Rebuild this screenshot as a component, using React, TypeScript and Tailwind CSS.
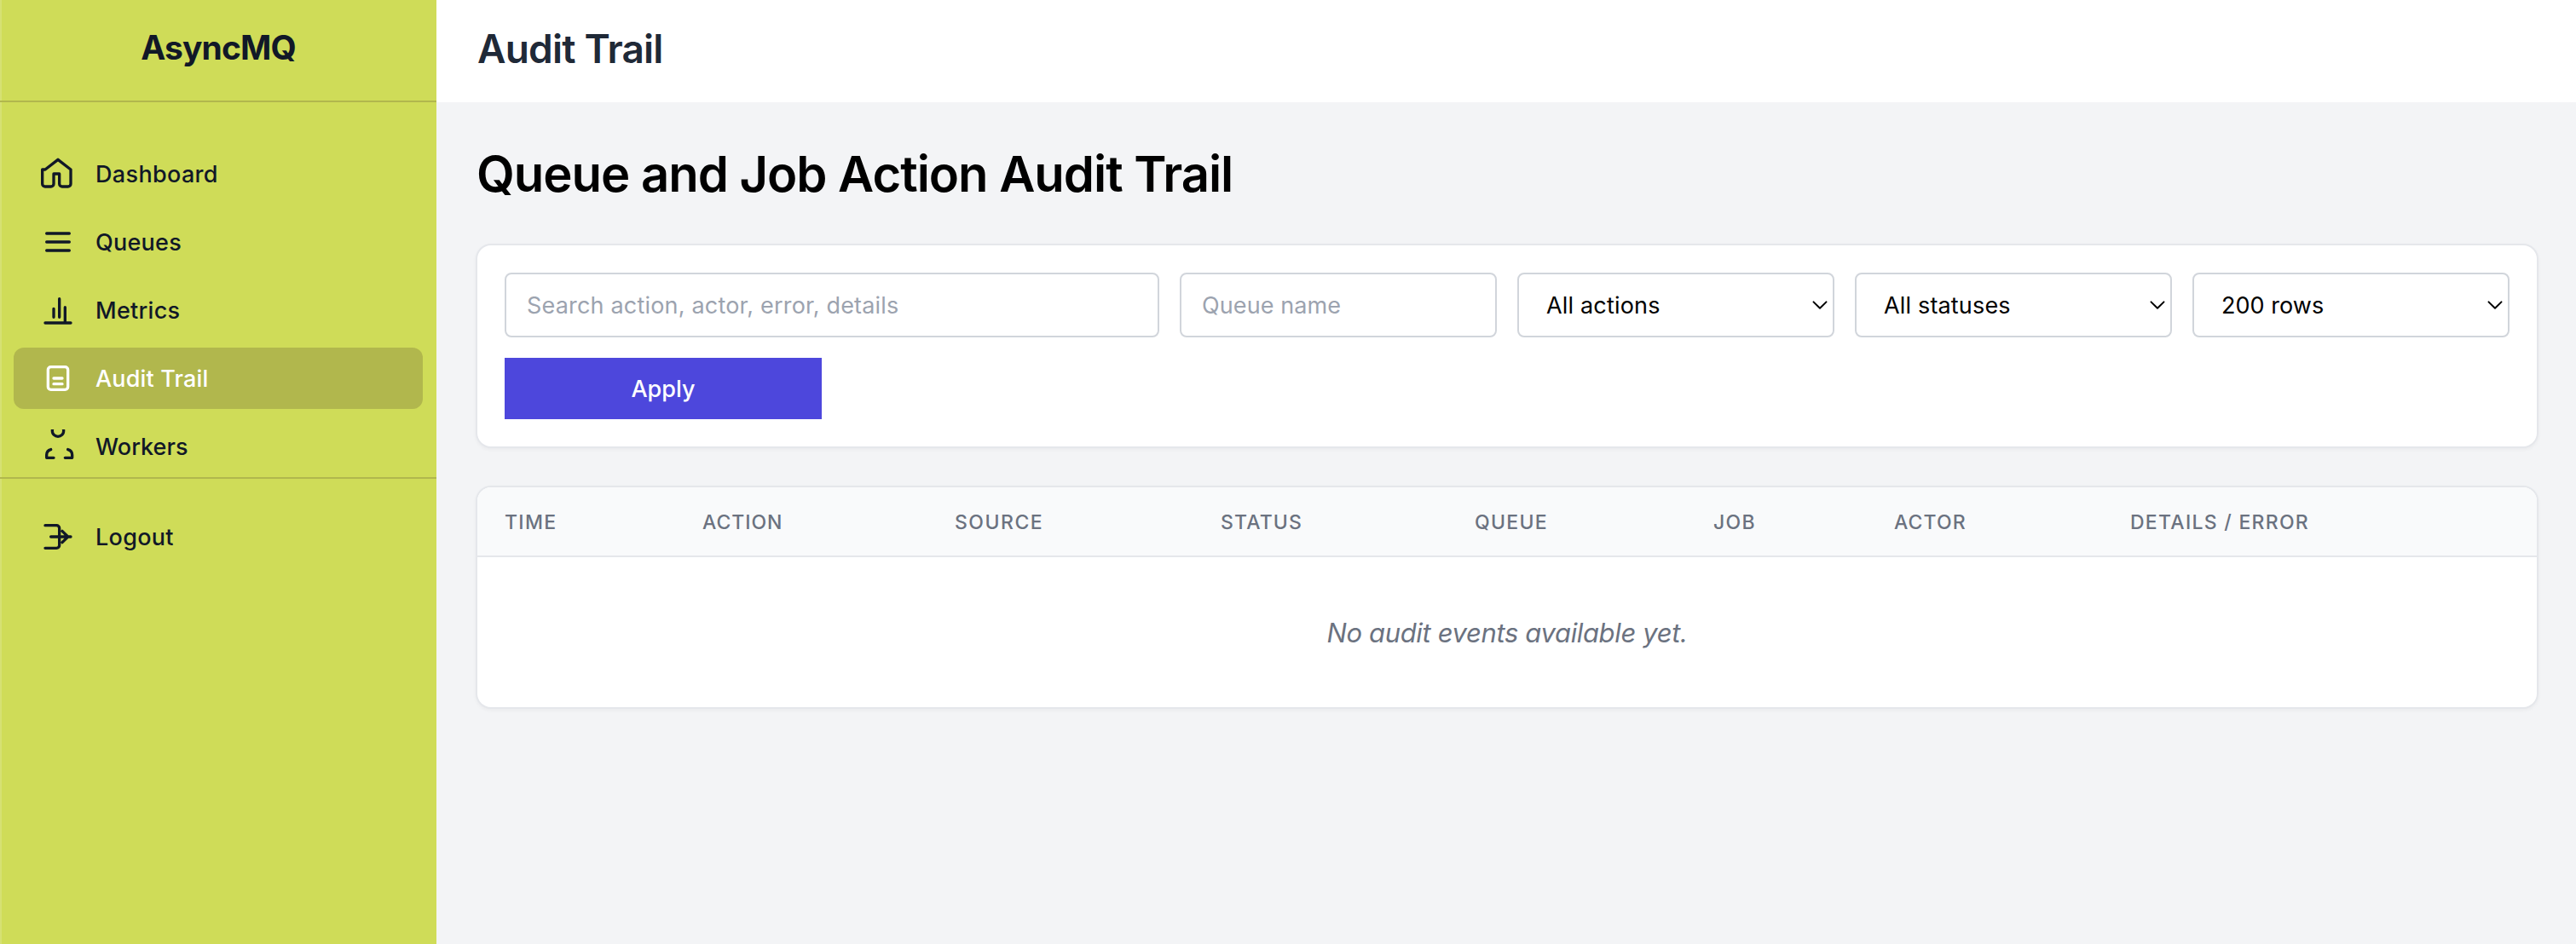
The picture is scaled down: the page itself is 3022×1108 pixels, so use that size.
import type { ReactNode } from "react";

type NavItem = {
  label: string;
  path: string;
  tracking: string;
  active?: boolean;
};

const navItems: NavItem[] = [
  {
    label: "Dashboard",
    path: "M3 9l9-7 9 7v10a2 2 0 01-2 2h-4a2 2 0 01-2-2v-7H9v7a2 2 0 01-2 2H3a2 2 0 01-2-2V9z",
    tracking: "tracking-[0.34px]",
  },
  {
    label: "Queues",
    path: "M4 6h16M4 12h16M4 18h16",
    tracking: "tracking-[0.24px]",
  },
  {
    label: "Metrics",
    path: "M3 21h18M9 17v-6M13 17V4M17 21V10",
    tracking: "tracking-[0.27px]",
  },
  {
    label: "Audit Trail",
    path: "M9 12h6m-6 4h6M7 4h10a2 2 0 012 2v12a2 2 0 01-2 2H7a2 2 0 01-2-2V6a2 2 0 012-2z",
    tracking: "tracking-[0.16px]",
    active: true,
  },
  {
    label: "Workers",
    path: "M17 20h5v-2a4 4 0 00-3-3.87M9 20H4v-2a4 4 0 013-3.87M16 1a4 4 0 01-8 0 4 4 0 018 0z",
    tracking: "tracking-[0.05px]",
  },
];

const logoutItem: NavItem = {
  label: "Logout",
  path: "M15 8l4 4-4 4M7 12h14M3 4h8a2 2 0 012 2v12a2 2 0 01-2 2H3",
  tracking: "tracking-[0.28px]",
};

const columns = [
  { label: "Time", className: "w-[232px] tracking-[1.3px]" },
  { label: "Action", className: "w-[296px] tracking-[0.96px]" },
  { label: "Source", className: "w-[312px] tracking-[1.5px]" },
  { label: "Status", className: "w-[298px] tracking-[1.16px]" },
  { label: "Queue", className: "w-[280px] tracking-[1.3px]" },
  { label: "Job", className: "w-[212px] tracking-[1.3px]" },
  { label: "Actor", className: "w-[277px] tracking-[1.1px]" },
  { label: "Details / Error", className: "tracking-[1.27px]" },
];

function NavLink({ item }: { item: NavItem }) {
  return (
    <a
      href="#"
      className={`flex h-[72px] items-center gap-6 rounded-xl px-8 text-[27px] font-medium ${
        item.active ? "bg-[#b1b74d] text-white" : "text-[#111827]"
      }`}
    >
      <svg
        className="size-10 shrink-0 overflow-hidden"
        viewBox="0 0 24 24"
        fill="none"
        stroke="currentColor"
        strokeWidth={2}
        strokeLinecap="round"
        strokeLinejoin="round"
      >
        <path d={item.path} />
      </svg>
      <span className={`pt-0.5 ${item.tracking}`}>{item.label}</span>
    </a>
  );
}

function FilterSelect({ value, className }: { value: string; className: string }) {
  return (
    <div className="relative">
      <select
        className={`h-[76px] w-full appearance-none rounded-lg border-2 border-[#d1d5db] bg-white pt-[3px] pl-8 text-[27px] text-black ${className}`}
      >
        <option>{value}</option>
      </select>
      <svg
        className="pointer-events-none absolute top-8 right-2 h-3 w-[18px]"
        viewBox="0 0 18 12"
        fill="none"
        stroke="black"
        strokeWidth={2}
        strokeLinecap="round"
        strokeLinejoin="round"
      >
        <path d="M1.5 2.4L9 9.8l7.5-7.4" />
      </svg>
    </div>
  );
}

function Card({ children, className = "" }: { children: ReactNode; className?: string }) {
  return (
    <section
      className={`rounded-2xl bg-white shadow-[0_0_0_2px_#e5e7eb,0_2px_4px_2px_rgba(0,0,0,0.04)] ${className}`}
    >
      {children}
    </section>
  );
}

export default function App() {
  return (
    <div className="flex h-[1108px] w-full overflow-hidden bg-[#f3f4f6] font-['Inter','Liberation_Sans',sans-serif]">
      <aside className="w-[512px] shrink-0 bg-[#cfdc58] shadow-[inset_2px_0_0_#d6e173]">
        <div className="h-[120px] border-b-2 border-[#b1b74d] pt-6 text-center">
          <span className="text-[39px] leading-[64px] font-bold tracking-[-0.9px] text-[#111827]">
            AsyncMQ
          </span>
        </div>
        <nav className="flex flex-col gap-2 px-4 pt-12">
          {navItems.map((item) => (
            <NavLink key={item.label} item={item} />
          ))}
        </nav>
        <div className="border-t-2 border-[#b1b74d] px-4 pt-8">
          <NavLink item={logoutItem} />
        </div>
      </aside>

      <div className="min-w-0 flex-1">
        <header className="h-[120px] bg-white px-12 pt-[25px]">
          <h2 className="text-[46px] leading-[64px] font-semibold tracking-[-0.79px] text-[#1f2937]">
            Audit Trail
          </h2>
        </header>

        <main className="flex flex-col gap-12 py-12 pr-[46px] pl-12">
          <h1 className="-ml-px text-[58px] leading-[72px] font-semibold tracking-[-1.02px] text-black">
            Queue and Job Action Audit Trail
          </h1>

          <Card className="p-8">
            <form className="grid grid-cols-6 gap-6">
              <input
                type="text"
                placeholder="Search action, actor, error, details"
                className="col-span-2 h-[76px] rounded-lg border-2 border-[#d1d5db] px-6 text-[27px] tracking-[0.19px] placeholder:text-[#9ca3af]"
              />
              <input
                type="text"
                placeholder="Queue name"
                className="h-[76px] rounded-lg border-2 border-[#d1d5db] px-6 text-[27px] tracking-[0.1px] placeholder:text-[#9ca3af]"
              />
              <FilterSelect value="All actions" className="tracking-[0.18px]" />
              <FilterSelect value="All statuses" className="tracking-[0.17px]" />
              <FilterSelect value="200 rows" className="tracking-[0.05px]" />
              <button
                type="button"
                className="h-[72px] bg-[#4d47dc] pt-0.5 text-[27px] font-medium text-white"
              >
                Apply
              </button>
            </form>
          </Card>

          <Card className="overflow-hidden">
            <table className="w-full table-fixed border-separate border-spacing-0">
              <thead>
                <tr className="h-[82px] bg-[#f9fafb]">
                  {columns.map((column) => (
                    <th
                      key={column.label}
                      className={`border-b-2 border-[#e5e7eb] px-8 pt-0.5 pb-0 text-left text-[23px] font-medium text-[#6b7280] uppercase ${column.className}`}
                    >
                      {column.label}
                    </th>
                  ))}
                </tr>
              </thead>
              <tbody>
                <tr className="h-44">
                  <td
                    colSpan={columns.length}
                    className="p-0 pt-0.5 text-center text-[31px] tracking-[-0.36px] text-[#6b7280] italic"
                  >
                    No audit events available yet.
                  </td>
                </tr>
              </tbody>
            </table>
          </Card>
        </main>
      </div>
    </div>
  );
}
